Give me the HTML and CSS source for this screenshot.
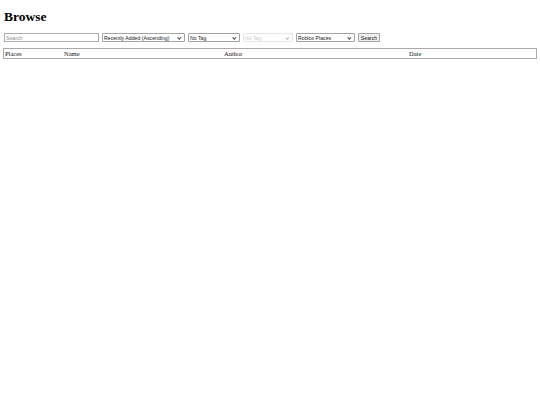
FILE: index.html
```html
<!DOCTYPE html>
<html>
<head>
<meta charset="utf-8">
<title>Browse</title>
<link rel="stylesheet" href="styles.css">
</head>
<body>
<h1 class="title">Browse</h1>
<form class="filters">
  <input class="search" type="text" placeholder="Search">
  <span class="pick pick-sort"><select class="sel"><option>Recently Added (Ascending)</option></select></span>
  <span class="pick pick-tag"><select class="sel"><option>No Tag</option></select></span>
  <span class="pick pick-tag2 is-disabled"><select class="sel" disabled><option>No Tag</option></select></span>
  <span class="pick pick-type"><select class="sel"><option>Roblox Places</option></select></span>
  <button class="btn" type="button">Search</button>
</form>
<table class="results">
  <thead>
    <tr>
      <th class="c-places">Places</th>
      <th class="c-name">Name</th>
      <th class="c-author">Author</th>
      <th class="c-date">Date</th>
    </tr>
  </thead>
</table>
</body>
</html>
```
FILE: styles.css
```css
html, body {
  background: #fff;
}
body {
  margin: 0;
  padding: 3px 3px 0 3px;
  font-family: "Liberation Serif", "Times New Roman", serif;
  color: #000;
}
.title {
  font-size: 13.5px;
  font-weight: bold;
  margin: 6px 0 0 1px;
  line-height: 15px;
}
.filters {
  display: flex;
  align-items: center;
  gap: 3px;
  margin: 9px 0 0 1px;
}
.search, .sel, .btn {
  font-family: "Liberation Sans", Arial, sans-serif;
  font-size: 5.2px;
  height: 9px;
  box-sizing: border-box;
  margin: 0;
  color: #222;
  outline: none;
}
.search {
  width: 95px;
  border: 1px solid #ababab;
  padding: 0 1px;
  background: #fff;
}
.search::placeholder {
  color: #8f8f8f;
}
.pick {
  position: relative;
  display: block;
  height: 9px;
}
.pick::after {
  content: "";
  position: absolute;
  right: 4px;
  top: 2.5px;
  width: 1.6px;
  height: 1.6px;
  border-right: 1px solid #444;
  border-bottom: 1px solid #444;
  transform: rotate(45deg);
  pointer-events: none;
}
.pick.is-disabled::after {
  border-color: #bdbdbd;
}
.sel {
  -webkit-appearance: none;
  appearance: none;
  display: block;
  width: 100%;
  border: 1px solid #a3a3a3;
  border-radius: 1px;
  padding: 0.5px 6px 0 1px;
  background: #fff;
  line-height: 6.5px;
}
.sel:disabled {
  color: #b5b5b5;
  border-color: #dcdcdc;
}
.pick-sort { width: 83px; }
.pick-tag { width: 52px; }
.pick-tag2 { width: 50px; }
.pick-type { width: 59px; }
.btn {
  width: 22px;
  padding: 0;
  border: 1px solid #a3a3a3;
  border-radius: 1px;
  background: #efefef;
}
.results {
  width: 534px;
  margin-top: 6px;
  border: 1px solid #aaaaaa;
  border-spacing: 0;
}
.results th {
  font-weight: normal;
  text-align: left;
  font-size: 6.5px;
  padding: 1px 1px;
  line-height: 7px;
  color: #111;
}
.c-places { width: 57px; }
.c-name { width: 158px; }
.c-author { width: 183px; }
.c-date { width: auto; }
```
